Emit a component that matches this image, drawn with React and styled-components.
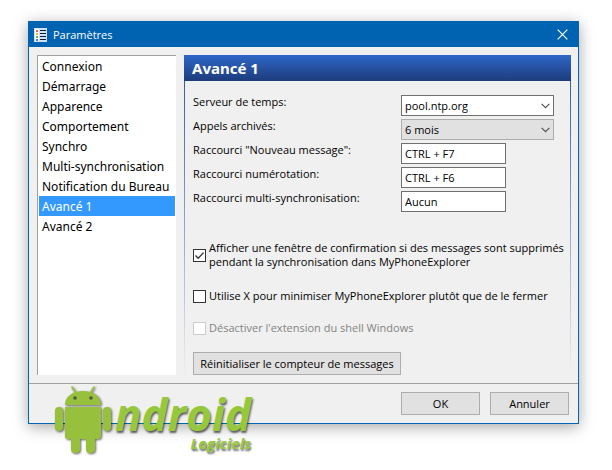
import React, { useState } from "react";
import styled, { createGlobalStyle } from "styled-components";

const SECTIONS = [
  "Connexion",
  "Démarrage",
  "Apparence",
  "Comportement",
  "Synchro",
  "Multi-synchronisation",
  "Notification du Bureau",
  "Avancé 1",
  "Avancé 2",
];

const SHORTCUTS = [
  { id: "message", label: 'Raccourci "Nouveau message":', value: "CTRL + F7" },
  { id: "dial", label: "Raccourci numérotation:", value: "CTRL + F6" },
  { id: "sync", label: "Raccourci multi-synchronisation:", value: "Aucun" },
];

const ListIcon = () => (
  <svg width="13" height="14" viewBox="0 0 13 14" aria-hidden="true">
    <rect width="13" height="14" fill="#cfe0fa" />
    <rect x="1" y="1" width="4" height="12" fill="#fff" />
    <rect x="2" y="2" width="2" height="2" fill="#f0604a" />
    <rect x="2" y="5" width="2" height="2" fill="#f5b030" />
    <rect x="2" y="8" width="2" height="2" fill="#55b855" />
    <rect x="2" y="11" width="2" height="2" fill="#4a7ae8" />
    <path
      d="M6 2.5h6M6 5.5h6M6 8.5h6M6 11.5h6"
      stroke="#1c1c30"
      strokeWidth="1"
    />
  </svg>
);

const CloseIcon = () => (
  <svg width="11" height="11" viewBox="0 0 11 11" aria-hidden="true">
    <path d="M.7.7l9.6 9.6M10.3.7L.7 10.3" stroke="#fff" strokeWidth="1.2" />
  </svg>
);

const Chevron = () => (
  <ChevronSvg width="9" height="6" viewBox="0 0 9 6" aria-hidden="true">
    <path d="M.6.8l3.9 3.9L8.4.8" fill="none" stroke="#555" strokeWidth="1.2" />
  </ChevronSvg>
);

const Robot = () => (
  <RobotSvg width="60" height="72" viewBox="0 0 60 72" aria-hidden="true">
    <g fill="#97c03d">
      <path
        d="M19 3l4 6M41 3l-4 6"
        stroke="#97c03d"
        strokeWidth="1.6"
        strokeLinecap="round"
      />
      <path d="M12 21C12 12 20 7 30 7s18 5 18 14z" />
      <path d="M12 23h36v29a3 3 0 0 1-3 3H15a3 3 0 0 1-3-3z" />
      <rect x="2" y="23" width="8" height="24" rx="4" />
      <rect x="50" y="23" width="8" height="24" rx="4" />
      <rect x="18" y="46" width="9" height="23" rx="4" />
      <rect x="33" y="46" width="9" height="23" rx="4" />
    </g>
    <circle cx="22" cy="14" r="1.8" fill="#4c5a3a" />
    <circle cx="38" cy="14" r="1.8" fill="#4c5a3a" />
  </RobotSvg>
);

const Field = ({ id, label, children }) => (
  <FieldRow>
    <FieldLabel htmlFor={id}>{label}</FieldLabel>
    {children}
  </FieldRow>
);

const App = () => {
  const [active, setActive] = useState("Avancé 1");

  return (
    <Page>
      <GlobalStyle />
      <Dialog>
        <TitleBar>
          <ListIcon />
          <Title>Paramètres</Title>
          <CloseButton type="button" aria-label="Fermer">
            <CloseIcon />
          </CloseButton>
        </TitleBar>
        <Content>
          <Sidebar>
            {SECTIONS.map((name) => (
              <SidebarItem
                key={name}
                type="button"
                $active={name === active}
                onClick={() => setActive(name)}
              >
                {name}
              </SidebarItem>
            ))}
          </Sidebar>
          <Panel>
            <PanelTitle>{active}</PanelTitle>
            <PanelBody>
              <Fields>
                <Field id="server" label="Serveur de temps:">
                  <SelectBox>
                    <Select id="server">
                      <option>pool.ntp.org</option>
                    </Select>
                    <Chevron />
                  </SelectBox>
                </Field>
                <Field id="archive" label="Appels archivés:">
                  <SelectBox>
                    <Select id="archive" $grey>
                      <option>6 mois</option>
                    </Select>
                    <Chevron />
                  </SelectBox>
                </Field>
                {SHORTCUTS.map(({ id, label, value }) => (
                  <Field key={id} id={id} label={label}>
                    <TextInput id={id} defaultValue={value} />
                  </Field>
                ))}
              </Fields>
              <Options>
                <Option>
                  <Checkbox type="checkbox" defaultChecked />
                  <span>
                    Afficher une fenêtre de confirmation si des messages sont
                    supprimés
                    <br />
                    pendant la synchronisation dans MyPhoneExplorer
                  </span>
                </Option>
                <Option>
                  <Checkbox type="checkbox" />
                  Utilise X pour minimiser MyPhoneExplorer plutôt que de le
                  fermer
                </Option>
                <Option $disabled>
                  <Checkbox type="checkbox" disabled />
                  Désactiver l'extension du shell Windows
                </Option>
              </Options>
              <ResetButton type="button">
                Réinitialiser le compteur de messages
              </ResetButton>
            </PanelBody>
          </Panel>
        </Content>
        <Footer>
          <FooterButton type="button">OK</FooterButton>
          <FooterButton type="button">Annuler</FooterButton>
        </Footer>
        <Logo>
          <Robot />
          <LogoText>
            <LogoName>ndroid</LogoName>
            <LogoSub>Logiciels</LogoSub>
          </LogoText>
        </Logo>
      </Dialog>
    </Page>
  );
};

const GlobalStyle = createGlobalStyle`
  * {
    box-sizing: border-box;
  }
  body {
    margin: 0;
    background: #fff;
    font-family: "Open Sans", "Noto Sans", sans-serif;
    font-size: 11px;
    color: #000;
  }
  button, input, select {
    font: inherit;
    color: inherit;
    margin: 0;
  }
`;

const Page = styled.main`
  padding: 21px 33px 45px 28px;
`;

const Dialog = styled.section`
  position: relative;
  background: #f0f0f0;
  border: 1px solid #0066b4;
  box-shadow: 0 3px 14px rgba(0, 0, 0, 0.35);
`;

const TitleBar = styled.header`
  display: flex;
  align-items: center;
  gap: 6px;
  height: 25px;
  padding: 0 10px 0 5px;
  background: #0063b1;
  color: #fff;
`;

const Title = styled.h1`
  flex: 1;
  margin: 0;
  font-size: 11px;
  font-weight: 400;
  line-height: 16px;
`;

const CloseButton = styled.button`
  display: flex;
  padding: 0;
  border: none;
  background: none;
`;

const Content = styled.div`
  display: flex;
  gap: 8px;
  padding: 8px;
  padding-right: 7px;
`;

const Sidebar = styled.nav`
  display: flex;
  flex: none;
  flex-direction: column;
  width: 139px;
  padding: 0 1px;
  background: #fff;
  border-top: 1px solid #a0a0a0;
  border-left: 1px solid #a0a0a0;
`;

const SidebarItem = styled.button`
  height: 20px;
  padding: 2px 3px 0;
  border: none;
  background: ${({ $active }) => ($active ? "#3399ff" : "transparent")};
  color: ${({ $active }) => ($active ? "#fff" : "#000")};
  font-family: "Noto Sans", sans-serif;
  font-size: 12px;
  line-height: 18px;
  text-align: left;
  white-space: nowrap;
`;

const Panel = styled.section`
  flex: 1;
  min-width: 0;
  background: linear-gradient(#24509f, #f0f0f0) left / 1px 100% no-repeat,
    linear-gradient(#24509f, #f0f0f0) right / 1px 100% no-repeat;
`;

const PanelTitle = styled.h2`
  height: 26px;
  margin: 0;
  padding: 0 8px;
  background: linear-gradient(#2f67c8, #1d3c7b);
  color: #fff;
  font-family: "Noto Sans", sans-serif;
  font-size: 15px;
  line-height: 26px;
`;

const PanelBody = styled.div`
  padding: 14px 8px 0 9px;
`;

const Fields = styled.div`
  display: grid;
  gap: 3px;
`;

const FieldRow = styled.div`
  display: grid;
  grid-template-columns: 208px 1fr;
  align-items: start;
`;

const FieldLabel = styled.label`
  line-height: 14px;
`;

const SelectBox = styled.div`
  position: relative;
  width: 153px;
`;

const Select = styled.select`
  display: block;
  width: 100%;
  height: 21px;
  padding: 0 20px 0 3px;
  appearance: none;
  border: 1px solid ${({ $grey }) => ($grey ? "#adadad" : "#707070")};
  border-radius: 0;
  background: ${({ $grey }) => ($grey ? "#e1e1e1" : "#fff")};
`;

const ChevronSvg = styled.svg`
  position: absolute;
  right: 4px;
  top: 8px;
  pointer-events: none;
`;

const TextInput = styled.input`
  width: 105px;
  height: 21px;
  padding: 0 3px;
  border: 1px solid #707070;
`;

const Options = styled.div`
  display: grid;
  gap: 14px;
  margin-top: 29px;
`;

const Option = styled.label`
  display: flex;
  align-items: center;
  gap: 3px;
  min-height: 18px;
  line-height: 14px;
  white-space: nowrap;
  color: ${({ $disabled }) => ($disabled ? "#838383" : "#000")};

  &:first-child {
    margin-bottom: 4px;
  }
`;

const Checkbox = styled.input`
  flex: none;
  width: 13px;
  height: 13px;
  appearance: none;
  border: 1px solid #333;
  background: #fff;

  &:checked {
    background: #fff
      url("data:image/svg+xml,%3Csvg xmlns='http://www.w3.org/2000/svg' viewBox='0 0 11 11'%3E%3Cpath d='M1.5 5.5l2.7 2.8L9.6 2.6' fill='none' stroke='%23333' stroke-width='1.3'/%3E%3C/svg%3E");
  }
  &:disabled {
    border-color: #ccc;
  }
`;

const Button = styled.button`
  height: 23px;
  padding: 0;
  border: 1px solid #adadad;
  background: #e1e1e1;
`;

const ResetButton = styled(Button)`
  display: block;
  width: 208px;
  margin-top: 15px;
`;

const Footer = styled.footer`
  display: flex;
  justify-content: flex-end;
  gap: 10px;
  padding: 8px 9px;
  border-top: 1px solid #a0a0a0;
`;

const FooterButton = styled(Button)`
  width: 79px;
`;

// The logo hangs over the bottom edge of the dialog
const Logo = styled.div`
  position: absolute;
  left: 24px;
  bottom: -33px;
  display: flex;
  gap: 2px;
`;

const RobotSvg = styled.svg`
  filter: drop-shadow(1px 1px 1px rgba(0, 0, 0, 0.6));
`;

const LogoText = styled.div`
  display: flex;
  flex-direction: column;
  padding-top: 8px;
  color: #95c93b;
  font-family: "Open Sans", sans-serif;
  font-style: italic;
  font-weight: 700;
  text-shadow: 1px 2px 2px rgba(0, 0, 0, 0.6);
`;

const LogoName = styled.span`
  font-size: 44px;
  line-height: 44px;
`;

const LogoSub = styled.span`
  align-self: flex-end;
  font-size: 15px;
  line-height: 14px;
`;

export default App;
